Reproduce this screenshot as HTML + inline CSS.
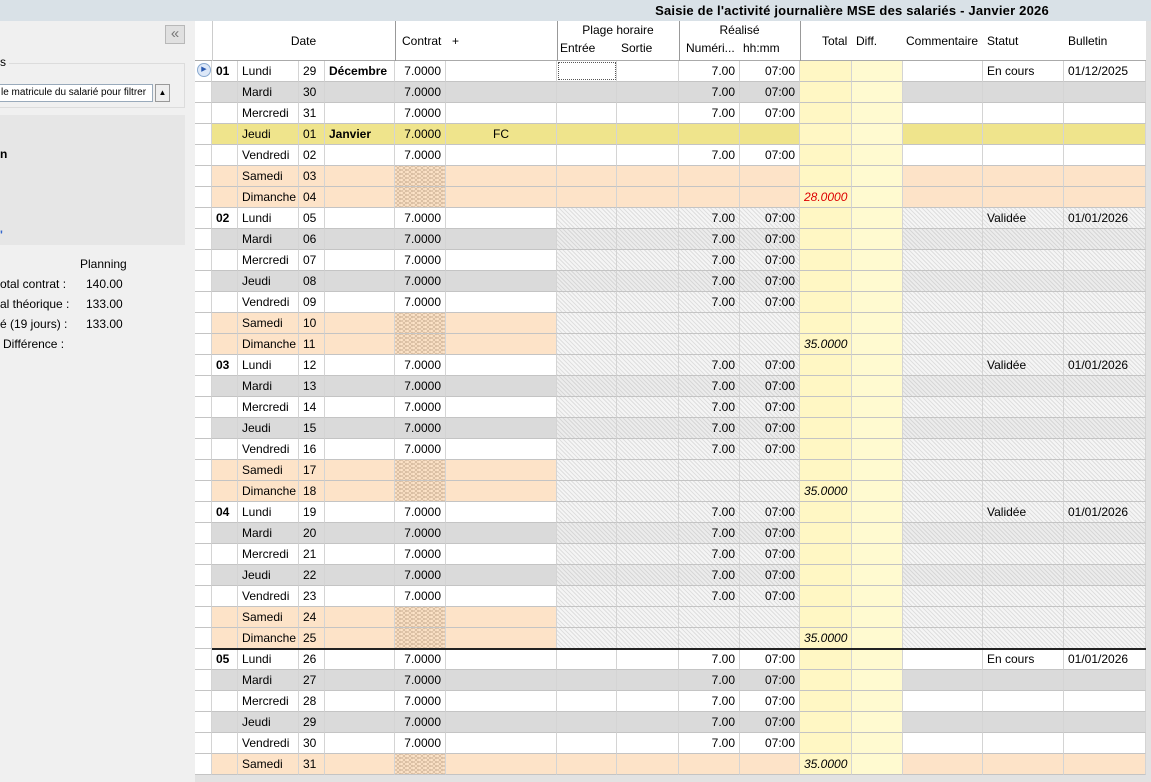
<!DOCTYPE html>
<html><head><meta charset="utf-8"><style>
*{margin:0;padding:0;box-sizing:border-box}
body{width:1151px;height:782px;overflow:hidden;background:#e2e2e2;font-family:"Liberation Sans",sans-serif;font-size:12px;color:#000;position:relative}
.a{position:absolute;white-space:nowrap}
#top{left:0;top:0;width:1151px;height:21px;background:#d9e1e7}
#title{left:540px;width:624px;top:3px;text-align:center;font-weight:bold;font-size:13px;letter-spacing:0.2px}
#left{left:0;top:21px;width:195px;height:761px;background:#f0f0f0}
.c{position:absolute;height:21px;line-height:20px;border-right:1px solid #d4d4d4;border-bottom:1px solid #c4c4c4;padding:0 4px;overflow:hidden;white-space:nowrap}
.r{text-align:right}
.h{background-image:repeating-linear-gradient(45deg,rgba(0,0,0,.09) 0 1px,transparent 1px 3px)}
.z{background-image:repeating-linear-gradient(45deg,rgba(120,90,60,.22) 0 1px,transparent 1px 3px),repeating-linear-gradient(135deg,rgba(120,90,60,.22) 0 1px,transparent 1px 3px);background-size:6px 4px}
</style></head><body>
<div class="a" id="top"></div>
<div class="a" id="title">Saisie de l'activité journalière MSE des salariés - Janvier 2026</div>
<div class="a" id="left"></div>
<div class="a" style="left:165px;top:25px;width:20px;height:19px;background:#e0e0e0;border:1px solid #b8b8b8;color:#777;font-size:15px;line-height:15px;text-align:center">«</div>
<div class="a" style="left:-2px;top:63px;width:187px;height:45px;border:1px solid #dcdcdc"></div>
<div class="a" style="left:0;top:55px;background:#f0f0f0;padding-right:3px">s</div>
<div class="a" style="left:-2px;top:84px;width:155px;height:18px;background:#fff;border:1px solid #9ab;font-size:10px;line-height:16px;padding-left:2px">le matricule du salarié pour filtrer</div>
<div class="a" style="left:155px;top:84px;width:15px;height:18px;background:#eee;border:1px solid #999;font-size:8px;line-height:16px;text-align:center">▲</div>
<div class="a" style="left:0;top:115px;width:185px;height:130px;background:#e6e6e6"></div>
<div class="a" style="left:0;top:147px;font-weight:bold">n</div>
<div class="a" style="left:0;top:228px;color:#36c;font-weight:bold">'</div>
<div class="a" style="left:80px;top:257px">Planning</div>
<div class="a" style="left:0;top:277px">otal contrat :</div><div class="a" style="left:86px;top:277px">140.00</div>
<div class="a" style="left:0;top:297px">al théorique :</div><div class="a" style="left:86px;top:297px">133.00</div>
<div class="a" style="left:0;top:317px">é (19 jours) :</div><div class="a" style="left:86px;top:317px">133.00</div>
<div class="a" style="left:3px;top:337px">Différence :</div>
<div class="a" style="left:195px;top:21px;width:951px;height:40px;background:#fff;border-bottom:1px solid #aaa"></div>
<div class="a" style="left:212px;top:21px;width:1px;height:40px;background:#ccc"></div>
<div class="a" style="left:395px;top:21px;width:1px;height:40px;background:#999"></div>
<div class="a" style="left:557px;top:21px;width:1px;height:40px;background:#999"></div>
<div class="a" style="left:679px;top:21px;width:1px;height:40px;background:#999"></div>
<div class="a" style="left:800px;top:21px;width:1px;height:40px;background:#999"></div>
<div class="a" style="left:212px;width:183px;top:34px;text-align:center">Date</div>
<div class="a" style="left:402px;top:34px">Contrat</div><div class="a" style="left:452px;top:34px">+</div>
<div class="a" style="left:557px;width:122px;top:23px;text-align:center">Plage horaire</div>
<div class="a" style="left:560px;top:41px">Entrée</div><div class="a" style="left:621px;top:41px">Sortie</div>
<div class="a" style="left:679px;width:121px;top:23px;text-align:center">Réalisé</div>
<div class="a" style="left:686px;top:41px">Numéri...</div><div class="a" style="left:743px;top:41px">hh:mm</div>
<div class="a" style="left:822px;top:34px">Total</div><div class="a" style="left:856px;top:34px">Diff.</div>
<div class="a" style="left:906px;top:34px">Commentaire</div><div class="a" style="left:987px;top:34px">Statut</div><div class="a" style="left:1068px;top:34px">Bulletin</div>
<div id="g"></div>
<script>
var X=[195,212,238,299,325,395,446,557,617,679,740,800,852,903,983,1064,1146];
var names=["Lundi","Mardi","Mercredi","Jeudi","Vendredi","Samedi","Dimanche"];
var h="";
for(var i=0;i<34;i++){
 var y=61+i*21,dw=i%7,wk=Math.floor(i/7);
 var d=i<3?29+i:i-2,ds=(d<10?"0":"")+d;
 var we=dw>=5,hat=wk>=1&&wk<=3,hol=i==3;
 var bg=hol?"#efe48c":we?"#fde3c8":(dw==1||dw==3)?"#dadada":"#fff";
 for(var k=0;k<16;k++){
  var b=bg,t="",cl="c",st="";
  if(k==0){b="#fff"}
  if(k==1){b=dw==0?"#fff":bg;if(dw==0){t="0"+(wk+1);st="font-weight:bold"}}
  if(k==2)t=names[dw];
  if(k==3)t=ds;
  if(k==4){if(i==0)t="Décembre";if(i==3)t="Janvier";st="font-weight:bold"}
  if(k==5){if(we)cl+=" z";else{t="7.0000";cl+=" r"}}
  if(k==6&&hol){t="FC";st="padding-left:47px"}
  if(k==9&&!we&&!hol){t="7.00";cl+=" r"}
  if(k==10&&!we&&!hol){t="07:00";cl+=" r"}
  if(k==11){b="#fff7c4";if(dw==6||i==33){t=i==6?"28.0000":"35.0000";st="font-style:italic;"+(i==6?"color:#d00":"")}}
  if(k==12)b="#fffad0";
  if(hat&&((k>=7&&k<=10)||k>=13)){b=(dw==1||dw==3)?"#ececec":"#f5f5f5";cl+=" h"}
  if(k==14&&dw==0)t=(wk==0||wk==4)?"En cours":"Validée";
  if(k==15&&dw==0)t=wk==0?"01/12/2025":"01/01/2026";
  h+='<div class="'+cl+'" style="left:'+X[k]+'px;top:'+y+'px;width:'+(X[k+1]-X[k])+'px;background-color:'+b+';'+st+'">'+t+'</div>';
 }
}
h+='<div class="a" style="left:212px;top:648px;width:934px;height:2px;background:#222"></div>';
h+='<div class="a" style="left:558px;top:62px;width:58px;height:18px;border:1px dotted #555"></div>';
h+='<div class="a" style="left:197px;top:63px;width:14px;height:14px;border-radius:50%;background:#dde8f8;border:1px solid #8aaad0;color:#2a5ab0;font-size:7px;line-height:12px;text-align:center">▶</div>';
document.getElementById("g").innerHTML=h;
</script>
</body></html>
